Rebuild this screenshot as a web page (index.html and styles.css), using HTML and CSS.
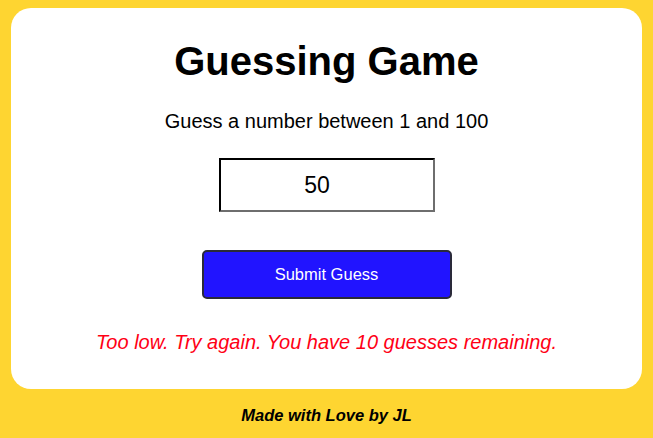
FILE: index.html
```html
<!DOCTYPE html>
<html>
<head>
<meta charset="utf-8">
<link rel="stylesheet" href="styles.css">
</head>
<body>
<main class="card">
  <h1 class="title">Guessing Game</h1>
  <p class="subtitle">Guess a number between 1 and 100</p>
  <input class="guess" type="text" value="50">
  <button class="submit">Submit Guess</button>
  <p class="message">Too low. Try again. You have 10 guesses remaining.</p>
</main>
<footer class="footer">Made with Love by JL</footer>
</body>
</html>
```
FILE: styles.css
```css
html, body {
  margin: 0;
  height: 100%;
}
body {
  background: #fed531;
  padding: 8px 11px 0;
  box-sizing: border-box;
  font-family: "Liberation Sans", Arial, sans-serif;
  color: #000;
}
.card {
  background: #fff;
  border-radius: 20px;
  display: flex;
  flex-direction: column;
  align-items: center;
  padding: 30px 20px 35px;
}
.title {
  margin: 0;
  font-size: 40px;
  font-weight: bold;
  line-height: 46px;
}
.subtitle {
  margin: 26px 0 0;
  font-size: 20px;
  line-height: 23px;
}
.guess {
  margin-top: 25px;
  width: 216px;
  height: 54px;
  box-sizing: border-box;
  border: 2px inset #767676;
  border-top-color: #1a1a1a;
  border-left-color: #1a1a1a;
  border-right-color: #6e6e6e;
  border-bottom-color: #6e6e6e;
  padding: 0 19px 0 0;
  text-align: center;
  font-family: "Liberation Sans", Arial, sans-serif;
  font-size: 23px;
  color: #000;
  background: #fff;
}
.submit {
  margin-top: 38px;
  width: 250px;
  height: 49px;
  box-sizing: border-box;
  background: #2114ff;
  color: #fff;
  border: 2px solid #2a2a3a;
  border-radius: 5px;
  font-family: "Liberation Sans", Arial, sans-serif;
  font-size: 16.5px;
}
.message {
  margin: 32px 0 0;
  font-size: 20px;
  line-height: 23px;
  font-style: italic;
  color: #ff0015;
}
.footer {
  text-align: center;
  margin-top: 17px;
  font-size: 16.5px;
  line-height: 19px;
  font-weight: bold;
  font-style: italic;
}
```
